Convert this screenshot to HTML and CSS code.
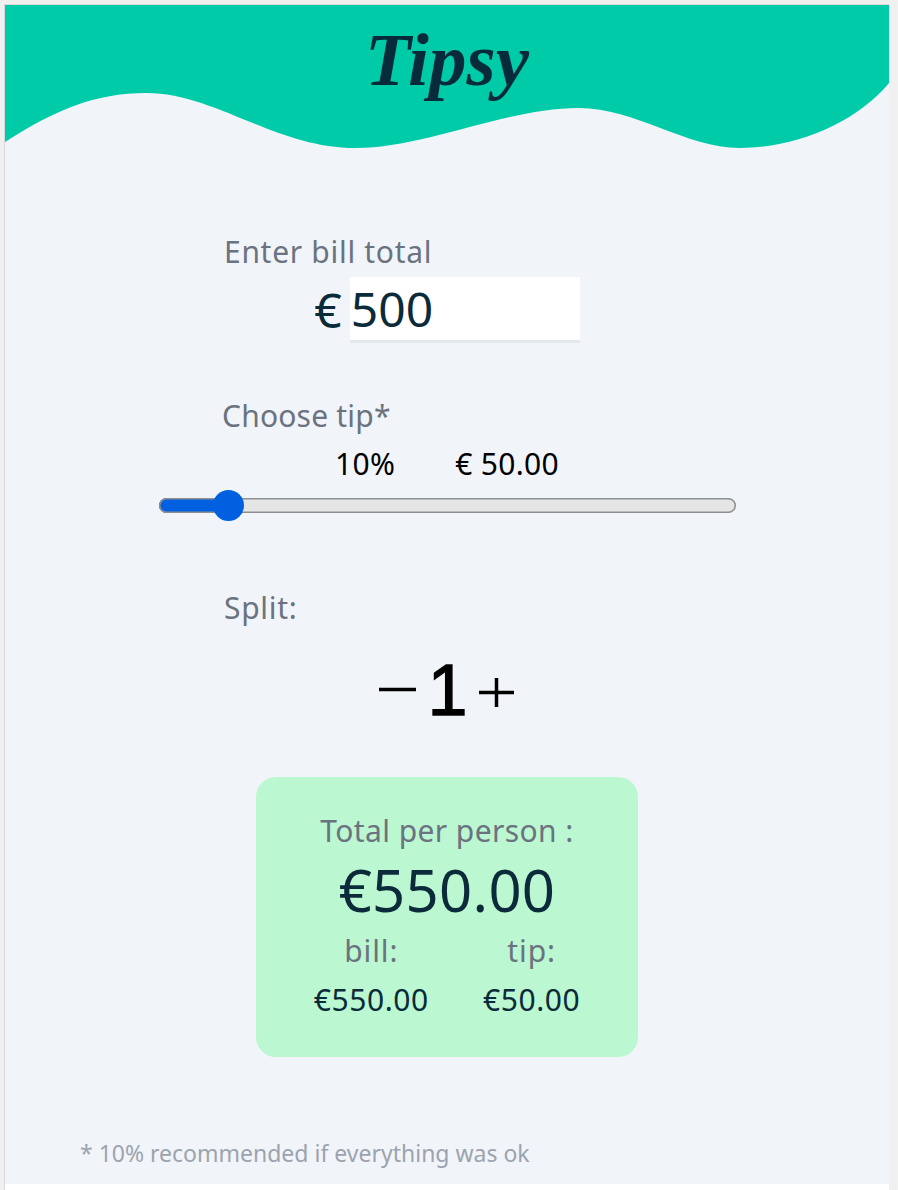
FILE: index.html
```html
<!DOCTYPE html>
<html lang="en">
<head>
<meta charset="utf-8">
<title>Tipsy</title>
<link rel="stylesheet" href="styles.css">
</head>
<body>
<div class="frame">
  <main class="app">
    <header class="header">
      <svg class="wave" viewBox="0 0 883 145" preserveAspectRatio="none" aria-hidden="true">
        <path fill="#00cba9" d="M0 0 H883 V78 C850 118 790 143 734 143 C680 143 630 103 573 103 C500 103 420 143 350 143 C270 143 210 88 141 88 C90 88 50 105 0 137 Z"/>
      </svg>
      <h1 class="title">Tipsy</h1>
    </header>

    <section class="form">
      <label class="label label-bill" for="bill">Enter bill total</label>
      <div class="bill-row">
        <span class="currency">€</span>
        <input id="bill" class="bill-input" type="text" value="500">
      </div>

      <p class="label label-tip">Choose tip*</p>
      <div class="tip-values">
        <span>10%</span>
        <span>€ 50.00</span>
      </div>
      <input class="slider" type="range" min="0" max="100" value="10" style="--fill: 70px">

      <p class="label label-split">Split:</p>
      <div class="split-row">
        <button class="split-btn split-minus" type="button" aria-label="decrease">
          <svg width="38" height="80" viewBox="0 0 38 80"><line x1="0" y1="39.5" x2="37" y2="39.5" stroke="#000" stroke-width="3.5"/></svg>
        </button>
        <span class="count">1</span>
        <button class="split-btn split-plus" type="button" aria-label="increase">
          <svg width="36" height="80" viewBox="0 0 36 80"><line x1="0" y1="42.5" x2="35" y2="42.5" stroke="#000" stroke-width="3.5"/><line x1="17.5" y1="28" x2="17.5" y2="57" stroke="#000" stroke-width="3.5"/></svg>
        </button>
      </div>

      <div class="summary">
        <p class="sum-label">Total per person :</p>
        <p class="sum-total">€550.00</p>
        <div class="sum-cols">
          <div class="sum-col">
            <p class="sum-label">bill:</p>
            <p class="sum-value">€550.00</p>
          </div>
          <div class="sum-col">
            <p class="sum-label">tip:</p>
            <p class="sum-value">€50.00</p>
          </div>
        </div>
      </div>
    </section>

    <p class="note">* 10% recommended if everything was ok</p>
  </main>
</div>
</body>
</html>
```

FILE: styles.css
```css
html, body {
  margin: 0;
}

body {
  background: #f0f0f0;
  padding: 4px 0 0 4px;
  font-family: "Noto Sans", sans-serif;
}

.frame {
  width: 884px;
  height: 1185px;
  border-top: 1px solid #d9d9d9;
  border-left: 1px solid #d9d9d9;
  background: #ffffff;
}

.app {
  height: 1179px;
  background: #f1f5f9;
}

.header {
  position: relative;
  height: 145px;
}

.wave {
  position: absolute;
  top: 0;
  left: 0;
  width: 100%;
  height: 145px;
  display: block;
}

.title {
  position: relative;
  margin: 0;
  padding-top: 17px;
  font-family: "Liberation Serif", serif;
  font-style: italic;
  font-weight: bold;
  font-size: 75px;
  line-height: 75px;
  text-align: center;
  color: #072b3b;
}

.form {
  display: flex;
  flex-direction: column;
  align-items: center;
}

.label {
  display: block;
  width: 446px;
  margin: 0;
  font-size: 30px;
  line-height: 36px;
  letter-spacing: 0.7px;
  color: #6b7280;
}

.label-bill {
  margin-top: 84px;
}

.bill-row {
  display: flex;
  align-items: center;
  gap: 8px;
  margin-top: 7px;
}

.currency {
  font-size: 48px;
  line-height: 66px;
  color: #0b2a3a;
}

.bill-input {
  width: 230px;
  height: 66px;
  box-sizing: border-box;
  border: none;
  border-bottom: 3px solid #e5e7eb;
  background: #ffffff;
  padding: 0 0 0 1px;
  font-family: "Noto Sans", sans-serif;
  font-size: 48px;
  color: #0b2a3a;
  outline: none;
}

.label-tip {
  margin-top: 55px;
  padding-right: 4px;
  letter-spacing: 0.2px;
}

.tip-values {
  display: flex;
  gap: 60px;
  margin-top: 12px;
  font-size: 30px;
  line-height: 36px;
  letter-spacing: 0.3px;
  color: #000000;
}

.slider {
  -webkit-appearance: none;
  appearance: none;
  display: block;
  width: 577px;
  height: 32px;
  margin: 7px 0 0;
  padding: 0;
  background: transparent;
}

.slider::-webkit-slider-runnable-track {
  height: 15px;
  border-radius: 8px;
  background: linear-gradient(to right, #0060df 0, #0060df var(--fill), #e5e5e5 var(--fill));
  box-shadow: inset 0 0 0 1.5px #8f8f8f;
}

.slider::-webkit-slider-thumb {
  -webkit-appearance: none;
  appearance: none;
  width: 31px;
  height: 31px;
  margin-top: -8px;
  border: none;
  border-radius: 50%;
  background: #0060df;
}

.label-split {
  margin-top: 69px;
}

.split-row {
  display: flex;
  align-items: flex-start;
  height: 80px;
  margin-top: 24px;
}

.split-btn {
  display: block;
  margin: 0;
  padding: 0;
  border: none;
  background: transparent;
}

.split-btn svg {
  display: block;
}

.count {
  margin: 0 11px 0 10px;
  font-family: "Liberation Sans", sans-serif;
  font-size: 72px;
  line-height: 80px;
  color: #000000;
  -webkit-text-stroke: 1.3px #000000;
}

.summary {
  width: 382px;
  height: 280px;
  box-sizing: border-box;
  margin-top: 47px;
  padding-top: 36px;
  border-radius: 20px;
  background: #bbf7d0;
  text-align: center;
}

.sum-label {
  margin: 0;
  font-size: 30px;
  line-height: 36px;
  letter-spacing: 0.4px;
  color: #6b7280;
}

.sum-total {
  margin: 9px 0 0;
  font-size: 58px;
  line-height: 64px;
  letter-spacing: 0.3px;
  color: #0b2a3a;
}

.sum-cols {
  display: flex;
  justify-content: center;
  gap: 54px;
  margin-top: 11px;
}

.sum-cols .sum-label {
  letter-spacing: 0.9px;
}

.sum-value {
  margin: 13px 0 0;
  font-size: 30px;
  line-height: 36px;
  letter-spacing: 0.6px;
  color: #0b2a3a;
}

.note {
  margin: 82px 0 0;
  padding-left: 75px;
  font-size: 23px;
  line-height: 28px;
  color: #9ca3af;
}
```
